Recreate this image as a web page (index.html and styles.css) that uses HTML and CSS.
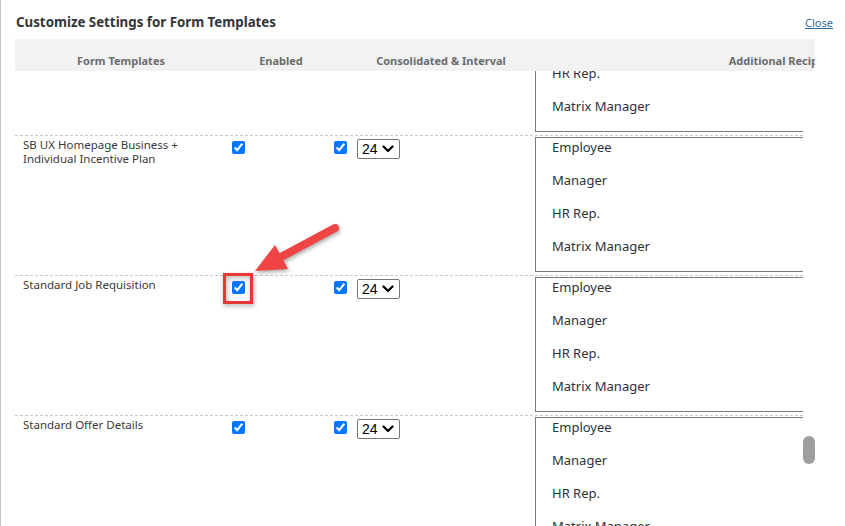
FILE: index.html
```html
<!doctype html>
<html>

<head>
    <meta charset="utf-8">
    <meta name="viewport" content="width=device-width, initial-scale=1.0">
    <title>Customize Settings for Form Templates</title>
    <link rel="stylesheet" href="styles.css">
</head>

<body>
    <div class="dialog">
        <!-- Заголовок діалогу -->
        <div class="dialog-head">
            <h1 class="title">Customize Settings for Form Templates</h1>
            <a href="#" class="close">Close</a>
        </div>

        <!-- Шапка таблиці -->
        <div class="grid-head">
            <div class="hcol hcol-name">Form Templates</div>
            <div class="hcol hcol-enabled">Enabled</div>
            <div class="hcol hcol-interval">Consolidated &amp; Interval</div>
            <div class="hcol hcol-recip">Additional Recipients</div>
        </div>

        <!-- Прокручувана частина -->
        <div class="grid-body">
            <div class="rows">
                <div class="row">
                    <div class="cell name">SB UX Compensation Plan</div>
                    <div class="cell enabled"><input type="checkbox" checked></div>
                    <div class="cell interval">
                        <input type="checkbox" checked>
                        <span class="select">24 <svg width="12" height="8" viewBox="0 0 12 8"><path d="M1.5 1.5 L6 6 L10.5 1.5" fill="none" stroke="#000" stroke-width="2.2" stroke-linecap="round" stroke-linejoin="round"/></svg></span>
                    </div>
                    <div class="cell recip">
                        <div class="listbox">
                            <ul>
                                <li>Employee</li>
                                <li>Manager</li>
                                <li>HR Rep.</li>
                                <li>Matrix Manager</li>
                            </ul>
                        </div>
                    </div>
                </div>

                <div class="row">
                    <div class="cell name">SB UX Homepage Business +<br>Individual Incentive Plan</div>
                    <div class="cell enabled"><input type="checkbox" checked></div>
                    <div class="cell interval">
                        <input type="checkbox" checked>
                        <span class="select">24 <svg width="12" height="8" viewBox="0 0 12 8"><path d="M1.5 1.5 L6 6 L10.5 1.5" fill="none" stroke="#000" stroke-width="2.2" stroke-linecap="round" stroke-linejoin="round"/></svg></span>
                    </div>
                    <div class="cell recip">
                        <div class="listbox">
                            <ul>
                                <li>Employee</li>
                                <li>Manager</li>
                                <li>HR Rep.</li>
                                <li>Matrix Manager</li>
                            </ul>
                        </div>
                    </div>
                </div>

                <div class="row">
                    <div class="cell name">Standard Job Requisition</div>
                    <div class="cell enabled"><input type="checkbox" checked></div>
                    <div class="cell interval">
                        <input type="checkbox" checked>
                        <span class="select">24 <svg width="12" height="8" viewBox="0 0 12 8"><path d="M1.5 1.5 L6 6 L10.5 1.5" fill="none" stroke="#000" stroke-width="2.2" stroke-linecap="round" stroke-linejoin="round"/></svg></span>
                    </div>
                    <div class="cell recip">
                        <div class="listbox">
                            <ul>
                                <li>Employee</li>
                                <li>Manager</li>
                                <li>HR Rep.</li>
                                <li>Matrix Manager</li>
                            </ul>
                        </div>
                    </div>
                </div>

                <div class="row">
                    <div class="cell name">Standard Offer Details</div>
                    <div class="cell enabled"><input type="checkbox" checked></div>
                    <div class="cell interval">
                        <input type="checkbox" checked>
                        <span class="select">24 <svg width="12" height="8" viewBox="0 0 12 8"><path d="M1.5 1.5 L6 6 L10.5 1.5" fill="none" stroke="#000" stroke-width="2.2" stroke-linecap="round" stroke-linejoin="round"/></svg></span>
                    </div>
                    <div class="cell recip">
                        <div class="listbox">
                            <ul>
                                <li>Employee</li>
                                <li>Manager</li>
                                <li>HR Rep.</li>
                                <li>Matrix Manager</li>
                            </ul>
                        </div>
                    </div>
                </div>
            </div>

            <!-- Повзунок прокрутки -->
            <div class="scroll-thumb"></div>
        </div>
    </div>

    <!-- Анотація: стрілка та рамка навколо чекбокса -->
    <svg class="annot" width="845" height="526" viewBox="0 0 845 526">
        <g class="annot-shape">
            <line x1="335" y1="228" x2="279" y2="258" stroke="#ef4444" stroke-width="8" stroke-linecap="round"/>
            <polygon points="255,271 275,245 288,269" fill="#ef4444"/>
            <rect x="224.5" y="274.5" width="27" height="28" fill="none" stroke="#e53935" stroke-width="3"/>
        </g>
    </svg>
</body>

</html>
```

FILE: styles.css
```css
body {
    margin: 0;
    padding: 0;
    font-family: "Noto Sans", Arial, sans-serif;
    background: #fff;
    overflow: hidden;
}

.dialog {
    position: relative;
    height: 526px;
    border-left: 1px solid #c8c8c8;
    padding-left: 14px;
    overflow: hidden;
}

.dialog-head {
    display: flex;
    justify-content: space-between;
    align-items: flex-start;
    height: 39px;
    width: 818px;
}

.title {
    margin: 0;
    padding: 12px 0 0 1px;
    font-size: 13.3px;
    line-height: 20px;
    font-weight: bold;
    color: #32363a;
}

.close {
    margin-top: 16px;
    font-size: 11px;
    line-height: 14px;
    color: #2f6a9e;
}

.grid-head {
    display: flex;
    width: 800px;
    height: 32px;
    background-color: #f2f2f2;
    overflow: hidden;
}

.hcol {
    flex: none;
    padding-top: 15px;
    font-size: 11px;
    line-height: 14px;
    font-weight: bold;
    color: #6a6d70;
    text-align: center;
    white-space: nowrap;
}

.hcol-name { width: 212px; }
.hcol-enabled { width: 108px; }
.hcol-interval { width: 212px; }
.hcol-recip { width: 480px; }

.grid-body {
    position: relative;
    width: 800px;
    height: 455px;
    overflow: hidden;
}

.rows {
    width: 788px;
    margin-top: -76px;
    overflow: hidden;
}

.row {
    display: flex;
    align-items: flex-start;
    height: 139px;
    border-top: 1px dashed #c8c8c8;
}

.cell {
    flex: none;
    box-sizing: border-box;
}

.name {
    width: 209px;
    padding: 2px 8px 0;
    font-size: 11.5px;
    line-height: 14px;
    color: #3a3a3a;
}

.enabled {
    width: 100px;
    padding: 5px 0 0 8px;
}

.interval {
    width: 191px;
    display: flex;
    align-items: flex-start;
    gap: 10px;
    padding: 5px 0 0 10px;
}

input[type="checkbox"] {
    display: block;
    width: 13px;
    height: 13px;
    margin: 0;
}

.select {
    display: flex;
    align-items: center;
    gap: 4px;
    box-sizing: border-box;
    width: 43px;
    height: 20px;
    margin-top: -2px;
    padding-left: 4px;
    border: 1px solid #767676;
    border-radius: 2px;
    font-family: "Liberation Sans", Arial, sans-serif;
    font-size: 14px;
    color: #000;
}

.recip {
    padding: 1px 0 0 20px;
}

.listbox {
    box-sizing: border-box;
    width: 300px;
    height: 135px;
    border: 1px solid #7a7a7a;
    overflow: hidden;
}

.listbox ul {
    list-style: none;
    margin: -7px 0 0;
    padding: 0 0 0 16px;
}

.listbox li {
    height: 33px;
    line-height: 33px;
    font-size: 13px;
    color: #2b323a;
}

.scroll-thumb {
    position: absolute;
    right: 0;
    top: 365px;
    width: 12px;
    height: 28px;
    border-radius: 6px;
    background-color: #9e9e9e;
}

.annot {
    position: absolute;
    left: 0;
    top: 0;
    pointer-events: none;
}

.annot-shape {
    filter: drop-shadow(1px 2px 2px rgba(0, 0, 0, 0.35));
}
```
